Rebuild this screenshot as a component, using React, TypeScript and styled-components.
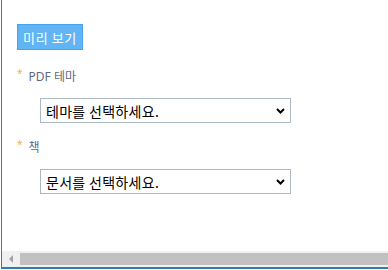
import React from 'react'
import styled, { createGlobalStyle } from 'styled-components'

const GlobalStyle = createGlobalStyle`
  html, body {
    margin: 0;
    padding: 0;
    background: #ffffff;
    overflow: hidden;
  }
  body {
    font-family: "Noto Sans", "Noto Sans CJK KR", sans-serif;
  }
`

const Frame = styled.div`
  box-sizing: border-box;
  width: 388px;
  height: 269px;
  margin-left: 1px;
  border-left: 1px solid #2f7fae;
  border-bottom: 2px solid #2f7fae;
  display: flex;
  flex-direction: column;
`

const Content = styled.div`
  flex: 1;
  padding: 24px 0 0 15px;
  display: flex;
  flex-direction: column;
  align-items: flex-start;
`

const PreviewButton = styled.button`
  box-sizing: border-box;
  width: 66px;
  height: 26px;
  padding: 0;
  border: 1px solid #46a2ea;
  background: #62b5f5;
  color: #ffffff;
  font-family: "Noto Sans CJK KR", sans-serif;
  font-size: 13px;
  letter-spacing: 0.6px;
  line-height: 1;
  cursor: pointer;
`

const Field = styled.div<{ $first?: boolean }>`
  display: flex;
  flex-direction: column;
  margin-top: ${p => (p.$first ? '19px' : '17px')};
`

const Label = styled.label`
  display: flex;
  align-items: flex-start;
  height: 16px;
  font-size: 12px;
  line-height: 16px;
  color: #5d6885;
  font-family: "Noto Sans", "Noto Sans CJK KR", sans-serif;
`

const Required = styled.span`
  color: #f3ad4b;
  font-size: 10px;
  line-height: 8px;
  margin-right: 6px;
  margin-top: 0;
`

const SelectBox = styled.div`
  position: relative;
  margin: 13px 0 0 23px;
  width: 251px;
  height: 25px;
`

const Select = styled.select`
  appearance: none;
  box-sizing: border-box;
  width: 100%;
  height: 100%;
  margin: 0;
  padding: 0 24px 0 5px;
  border: 1px solid #aab9c6;
  border-radius: 0;
  background: #ffffff;
  color: #000000;
  font-family: "Noto Sans CJK KR", sans-serif;
  font-size: 14px;
  letter-spacing: 0.3px;
  outline: none;
`

const Chevron = styled.svg`
  position: absolute;
  right: 6px;
  top: 10px;
  pointer-events: none;
`

const ScrollBar = styled.div`
  height: 16px;
  background: #f0f0f0;
  display: flex;
  align-items: center;
`

const ArrowCell = styled.div`
  width: 18px;
  display: flex;
  justify-content: center;
`

const Thumb = styled.div`
  flex: 1;
  height: 12px;
  background: #c1c1c1;
`

const ChevronIcon = () => (
  <Chevron width="9" height="6" viewBox="0 0 9 6">
    <path d="M1 1 L4.5 4.5 L8 1" fill="none" stroke="#000" strokeWidth="2" />
  </Chevron>
)

const fields = [
  { label: 'PDF 테마', placeholder: '테마를 선택하세요.' },
  { label: '책', placeholder: '문서를 선택하세요.' },
]

export default function App() {
  return (
    <>
      <GlobalStyle />
      <Frame>
        <Content>
          <PreviewButton>미리 보기</PreviewButton>
          {fields.map((f, i) => (
            <Field key={f.label} $first={i === 0}>
              <Label>
                <Required>*</Required>
                {f.label}
              </Label>
              <SelectBox>
                <Select defaultValue="">
                  <option value="">{f.placeholder}</option>
                </Select>
                <ChevronIcon />
              </SelectBox>
            </Field>
          ))}
        </Content>
        <ScrollBar>
          <ArrowCell>
            <svg width="5" height="8" viewBox="0 0 5 8">
              <path d="M4 0 L0 4 L4 8 Z" fill="#a3a3a3" />
            </svg>
          </ArrowCell>
          <Thumb />
        </ScrollBar>
      </Frame>
    </>
  )
}
